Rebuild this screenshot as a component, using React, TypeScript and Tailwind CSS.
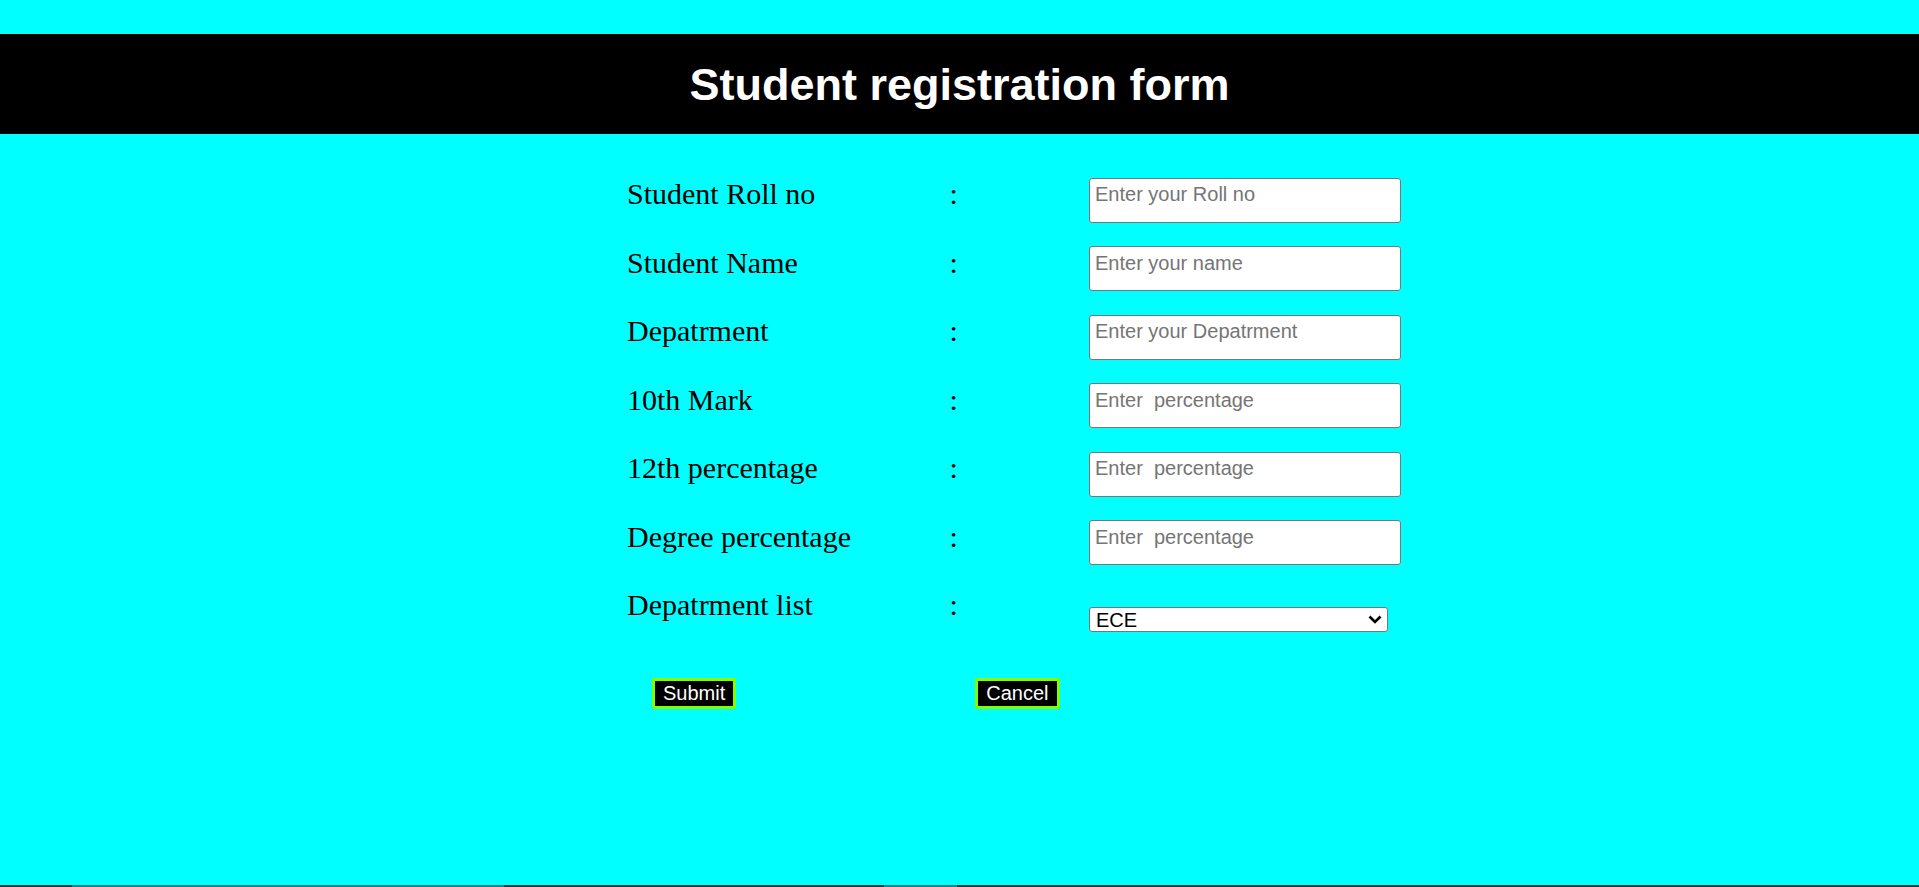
import React from "react";

const rows: [string, string][] = [
  ["Student Roll no", "Enter your Roll no"],
  ["Student Name", "Enter your name"],
  ["Depatrment", "Enter your Depatrment"],
  ["10th Mark", "Enter  percentage"],
  ["12th percentage", "Enter  percentage"],
  ["Degree percentage", "Enter  percentage"],
];

export default function App() {
  return (
    <div className="h-[887px] bg-[#00ffff] flex flex-col overflow-hidden">
      <div className="h-[34px] shrink-0" />
      <header className="h-[100px] shrink-0 bg-black flex items-center justify-center">
        <h1 className="text-white text-[45px] font-bold leading-none font-['Liberation_Sans',Arial,sans-serif]">
          Student registration form
        </h1>
      </header>
      <form className="pt-[42px] pl-[627px] flex flex-col" onSubmit={(e) => e.preventDefault()}>
        {rows.map(([label, ph]) => (
          <div key={label} className="h-[68.5px] flex items-start">
            <label className="-mt-[5px] w-[322.5px] text-[30px] text-black font-['Liberation_Serif','Times_New_Roman',serif]">
              {label}
            </label>
            <span className="-mt-[5px] w-[139.5px] text-[30px] text-black font-['Liberation_Serif','Times_New_Roman',serif]">
              :
            </span>
            <input
              type="text"
              placeholder={ph}
              className="mt-[1.5px] w-[312px] h-[45px] bg-white border border-[#767676] rounded-[3px] pl-[5px] pt-[5px] pb-[16px] text-[20px] text-black placeholder:text-[#757575] font-['Liberation_Sans',Arial,sans-serif] outline-none"
            />
          </div>
        ))}
        <div className="h-[68.5px] flex items-start">
          <label className="-mt-[5px] w-[322.5px] text-[30px] text-black font-['Liberation_Serif','Times_New_Roman',serif]">
            Depatrment list
          </label>
          <span className="-mt-[5px] w-[139.5px] text-[30px] text-black font-['Liberation_Serif','Times_New_Roman',serif]">
            :
          </span>
          <div className="relative mt-[20px] w-[299px] h-[25px]">
            <select
              defaultValue="ECE"
              className="appearance-none w-full h-full bg-white border border-[#767676] rounded-[3px] pl-[6px] text-[20px] leading-none text-black font-['Liberation_Sans',Arial,sans-serif] outline-none"
            >
              <option>ECE</option>
              <option>CSE</option>
              <option>EEE</option>
              <option>MECH</option>
              <option>CIVIL</option>
            </select>
            <svg
              className="pointer-events-none absolute right-[6px] top-[8px]"
              width="14"
              height="9"
              viewBox="0 0 14 9"
              fill="none"
            >
              <path d="M1.5 1.5 L7 7 L12.5 1.5" stroke="black" strokeWidth="2.6" />
            </svg>
          </div>
        </div>
        <div className="mt-[22.5px] flex items-start">
          <button
            type="submit"
            className="ml-[25px] bg-black text-white border-[3px] border-[#7fff00] px-2 py-px text-[20px] leading-[23px] font-['Liberation_Sans',Arial,sans-serif]"
          >
            Submit
          </button>
          <button
            type="button"
            className="ml-[239px] bg-black text-white border-[3px] border-[#7fff00] px-2 py-px text-[20px] leading-[23px] font-['Liberation_Sans',Arial,sans-serif]"
          >
            Cancel
          </button>
        </div>
      </form>
      <div className="flex-1" />
      <div className="h-[2px] shrink-0 flex bg-[#003838]">
        <div className="w-[72px]" />
        <div className="w-[432px] bg-[#2a8080]" />
        <div className="w-[380px]" />
        <div className="w-[73px] bg-[#2a8080]" />
      </div>
    </div>
  );
}
